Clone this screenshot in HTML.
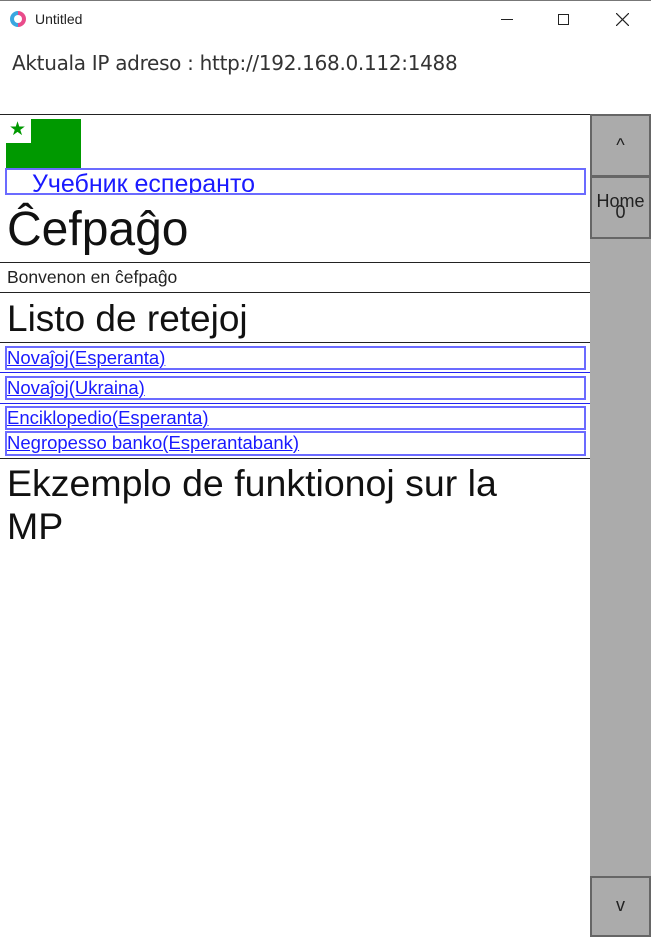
<!DOCTYPE html>
<html><head><meta charset="utf-8"><style>
*{margin:0;padding:0;box-sizing:border-box}
body{width:651px;height:937px;overflow:hidden;background:#fff;position:relative;font-family:"Liberation Sans","DejaVu Sans",sans-serif;color:#111}
.a{position:absolute;white-space:nowrap}
.hl{position:absolute;left:0;width:590px;height:1px;background:#222}
.lb{position:absolute;left:5px;width:581px;border:2px solid #6b6bff;color:#1a1aff;text-decoration:underline;font-size:18.5px;line-height:19px;padding-left:0;overflow:hidden}
.btn{position:absolute;left:590px;width:61px;background:#ababab;border:2px solid #666;text-align:center;color:#222}
</style></head><body>
<div class="a" style="left:0;top:0;width:651px;height:1px;background:#777"></div>
<div class="a" style="left:10px;top:11px;width:16px;height:16px;border-radius:50%;background:conic-gradient(#e94b8a 0 50%,#3aa7e0 50% 100%)"></div>
<div class="a" style="left:14px;top:15px;width:8px;height:8px;border-radius:50%;background:#fff"></div>
<div class="a" style="left:35px;top:11px;font-size:14px;color:#222">Untitled</div>
<div class="a" style="left:501px;top:19px;width:12px;height:1px;background:#222"></div>
<div class="a" style="left:558px;top:14px;width:11px;height:11px;border:1px solid #222"></div>
<svg class="a" style="left:616px;top:13px" width="13" height="13"><path d="M0 0L13 13M13 0L0 13" stroke="#222" stroke-width="1.2"/></svg>
<div class="a" style="left:12px;top:51px;font-size:20px;color:#333;font-family:'DejaVu Sans',sans-serif;letter-spacing:-0.3px">Aktuala IP adreso : http://192.168.0.112:1488</div>
<div class="hl" style="top:114px"></div>
<div class="a" style="left:590px;top:114px;width:61px;height:823px;background:#ababab"></div>
<div class="btn" style="top:114px;height:63px;line-height:58px;font-size:18px">^</div>
<div class="btn" style="top:176px;height:63px;font-size:18px;line-height:18px;padding-top:14px">Home<div style="position:absolute;left:0;right:0;top:25px">0</div></div>
<div class="btn" style="top:876px;height:61px;line-height:54px;font-size:18px">v</div>
<div class="a" style="left:6px;top:119px;width:75px;height:49px;background:#009900"></div>
<div class="a" style="left:6px;top:119px;width:25px;height:24px;background:#fff;color:#009900;font-size:19px;line-height:22px;padding-left:3px">★</div>
<div class="lb" style="top:168px;height:27px;font-size:25px;line-height:28px;padding-left:25px">Учебник есперанто</div>
<div class="a" style="left:7px;top:201px;font-size:48px;line-height:58px">Ĉefpaĝo</div>
<div class="hl" style="top:262px"></div>
<div class="a" style="left:7px;top:267px;font-size:17.5px;line-height:21px;color:#222">Bonvenon en ĉefpaĝo</div>
<div class="hl" style="top:292px"></div>
<div class="a" style="left:7px;top:297px;font-size:37px;line-height:44px">Listo de retejoj</div>
<div class="hl" style="top:342px"></div>
<div class="lb" style="top:346px;height:24px">Novaĵoj(Esperanta)</div>
<div class="a" style="left:0;top:372px;width:590px;height:1px;background:#2222ee"></div>
<div class="lb" style="top:376px;height:24px">Novaĵoj(Ukraina)</div>
<div class="a" style="left:0;top:403px;width:590px;height:1px;background:#2222ee"></div>
<div class="lb" style="top:406px;height:24px">Enciklopedio(Esperanta)</div>
<div class="lb" style="top:431px;height:25px">Negropesso banko(Esperantabank)</div>
<div class="hl" style="top:458px"></div>
<div class="a" style="left:7px;top:462px;font-size:37.5px;line-height:43px">Ekzemplo de funktionoj sur la<br>MP</div>
</body></html>
